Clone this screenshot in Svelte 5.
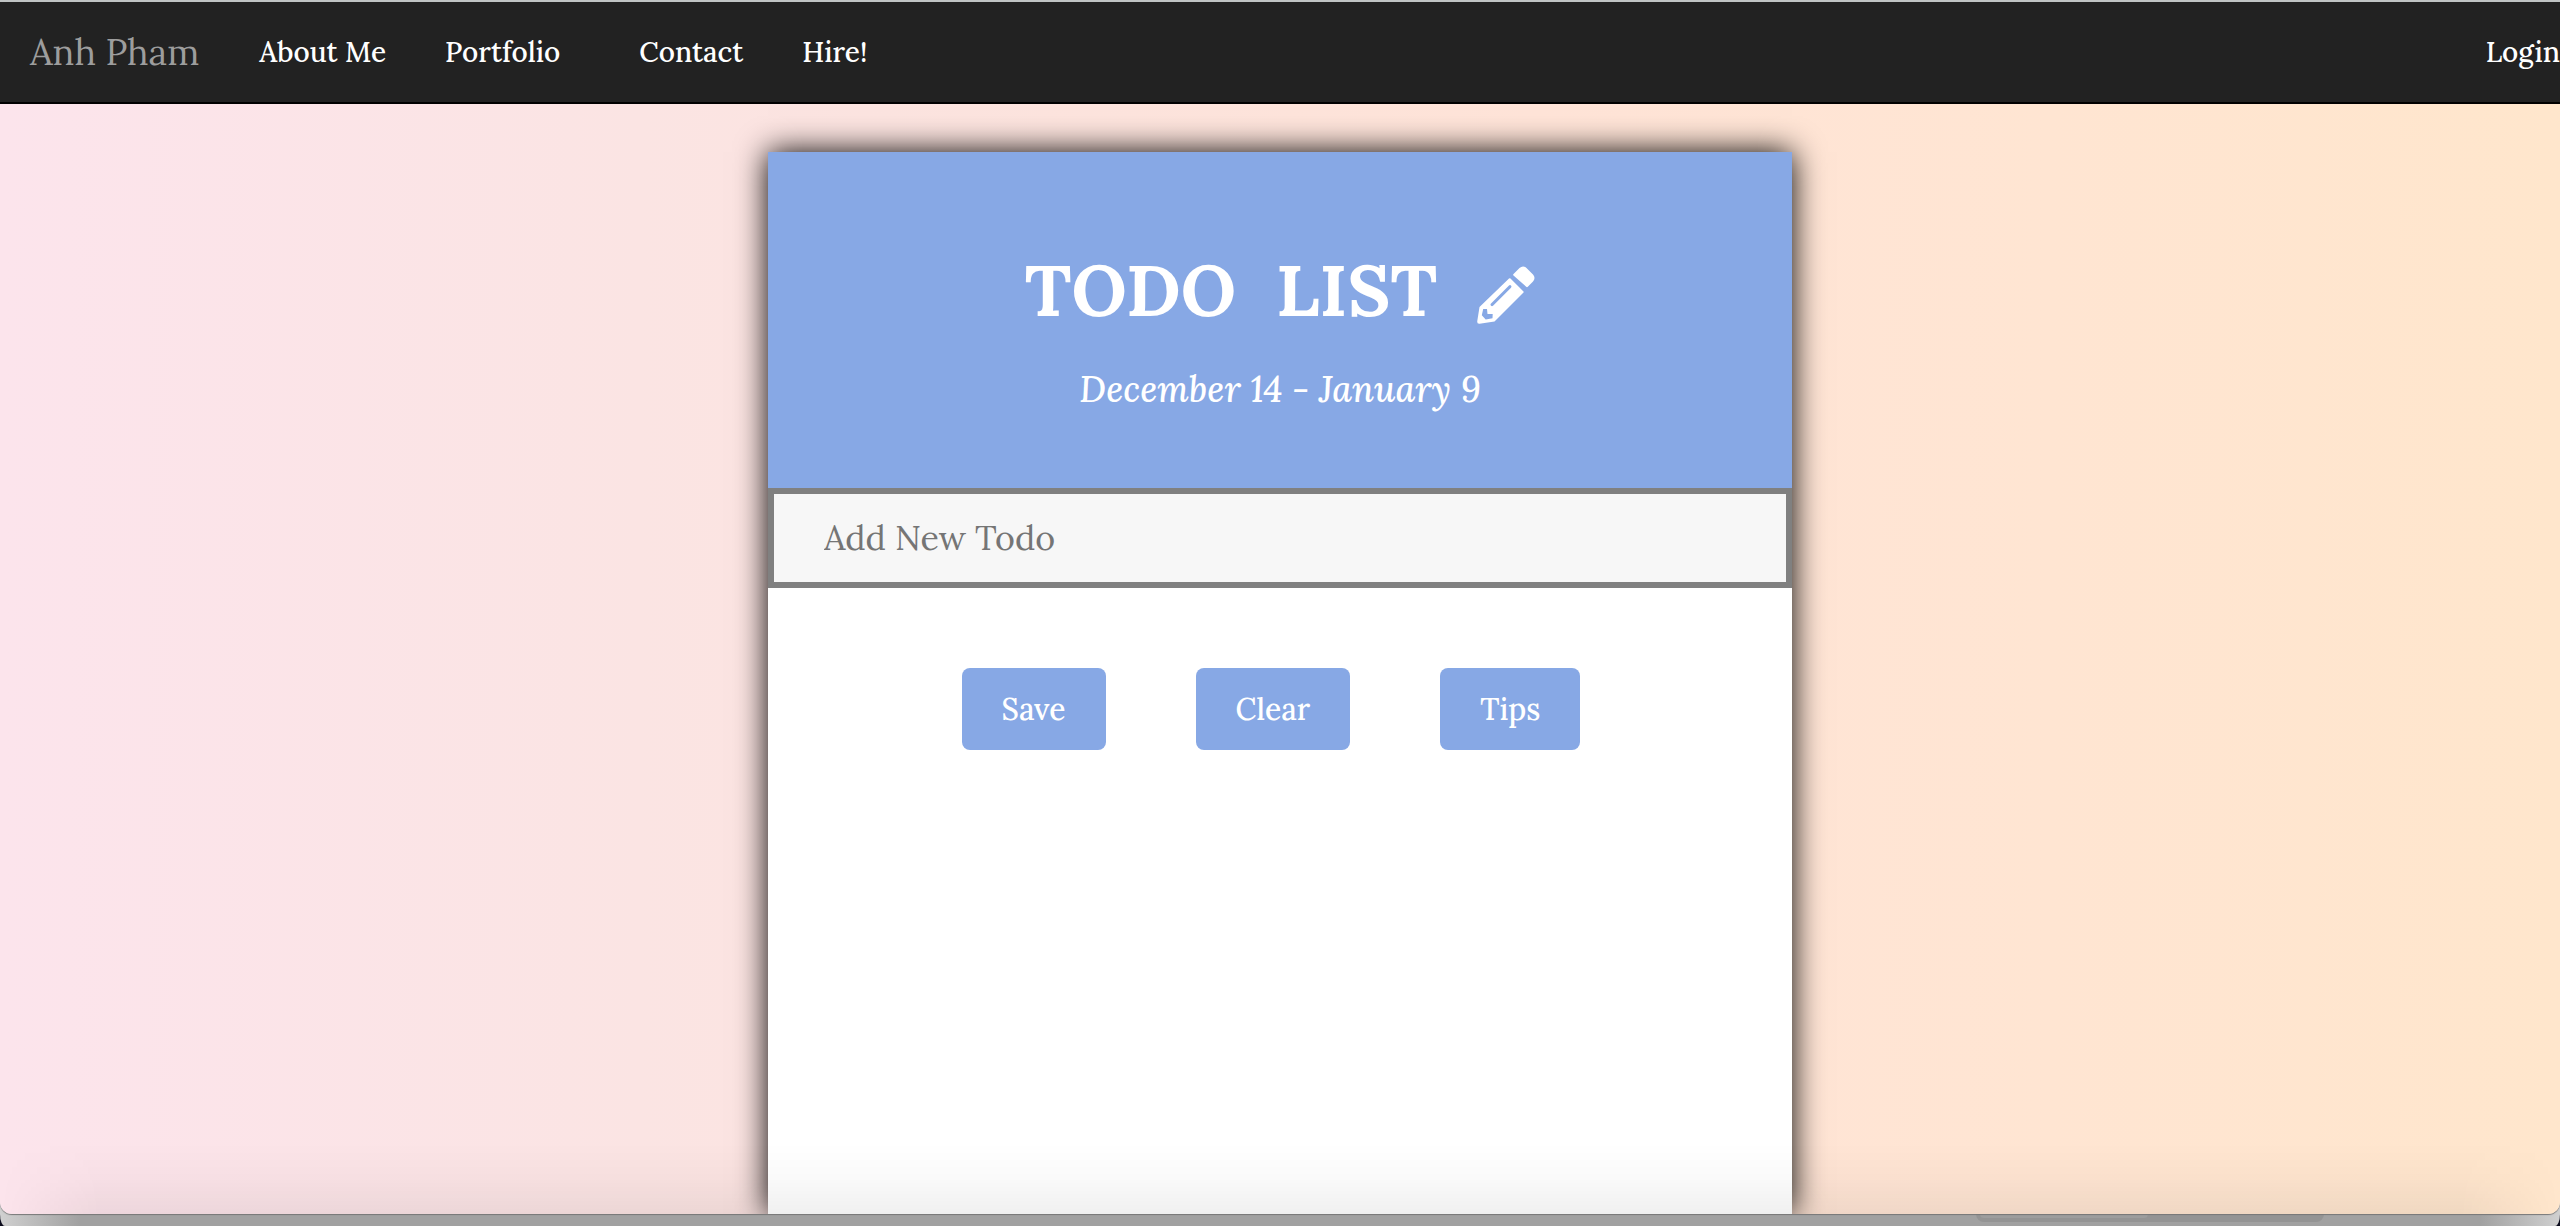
<script lang="ts">
  const links = ['About Me', 'Portfolio', 'Contact', 'Hire!'];
  const actions = ['Save', 'Clear', 'Tips'];
  let todo = $state('');
</script>

<div class="desktop">
  <div class="window">
    <nav>
      <a class="brand" href="#home">Anh Pham</a>
      <ul>
        {#each links as link}
          <li class:wide={link === 'Portfolio'}><a href="#{link}">{link}</a></li>
        {/each}
      </ul>
      <a class="login" href="#login">Login</a>
    </nav>

    <main>
      <section class="card">
        <header>
          <h1>
            <span>TODO</span>
            <span>LIST</span>
            <svg viewBox="0 0 58 58" aria-hidden="true">
              <path fill="#fff" fill-rule="evenodd" d="M33.500 12.500 L46.500 25.500 Q47 26 46.500 26.500 L17.500 55.500 L2.500 57.800 Q0 58 0.200 55.500 L2.500 41 L32 12.500 Q32.800 11.800 33.500 12.500 Z M32 19.500 L13.800 37.800 Q13 38.800 14 39.800 Q15 40.600 16 39.800 L34 21.800 Q35 20.500 34 19.500 Q33 18.700 32 19.500 Z M6.200 43 L4.800 49.300 L8.700 53.500 L15.500 52.300 L15.700 48 L10.500 48 L10 43 Z" />
              <path fill="#fff" d="M36.500 8 L42.500 2 Q46 -1 49.500 2 L56 8.500 Q59 12 56 15.500 L50.800 20.800 Q50 21.500 49.200 20.800 L36.500 9.500 Q35.800 8.700 36.500 8 Z" />
            </svg>
          </h1>
          <p>December 14 - January 9</p>
        </header>
        <input type="text" placeholder="Add New Todo" aria-label="Add New Todo" bind:value={todo} />
        <div class="actions">
          {#each actions as action}
            <button type="button">{action}</button>
          {/each}
        </div>
      </section>
    </main>
  </div>
  <div class="dock"><div class="tab"><div class="thumb"></div></div></div>
</div>

<style>
  :global(body) {
    margin: 0;
    background: #0c0c1c;
  }
  .desktop {
    min-height: 100vh;
    display: flex;
    flex-direction: column;
    overflow: hidden;
    border-radius: 0 0 5px 5px / 0 0 12px 12px;
    background: linear-gradient(90deg, #d0d0d0, #a1a1a1 80px, #a1a1a1 calc(100% - 80px), #d0d0d0);
    font-family: Lora, 'Liberation Serif', serif;
  }
  .window {
    flex: 1;
    display: flex;
    flex-direction: column;
    position: relative;
    overflow: hidden;
    border-radius: 0 0 12px 12px;
    box-shadow: 0 1px 1px #777;
    background: linear-gradient(90deg, #fce4ec, #fbe4e3 25%, #ffe4d8 60%, #ffe6cc);
  }
  .window::after {
    content: '';
    position: absolute;
    inset: auto 0 0 0;
    height: 72px;
    background: linear-gradient(transparent, rgba(0, 0, 0, 0.02) 50%, rgba(0, 0, 0, 0.06));
    mask-image: linear-gradient(90deg, transparent, #000 100px, #000 calc(100% - 100px), transparent);
    pointer-events: none;
  }
  nav {
    display: flex;
    align-items: center;
    height: 100px;
    padding-left: 30px;
    border-top: 2px solid #c0c4c4;
    border-bottom: 2px solid #000;
    background: #222;
  }
  a {
    color: #fff;
    font-size: 28px;
    font-weight: 500;
    line-height: 40px;
    text-decoration: none;
  }
  .brand {
    color: #9d9d9d;
    font-size: 36px;
    font-weight: 400;
  }
  ul {
    display: flex;
    gap: 59px;
    margin: 0 0 0 60px;
    padding: 0;
    list-style: none;
  }
  .wide {
    margin-right: 20px;
  }
  .login {
    margin-left: auto;
  }
  main {
    flex: 1;
    display: flex;
    justify-content: center;
    padding-top: 48px;
  }
  .card {
    width: 40%;
    background: #fff;
    box-shadow: 0 0 30px #000;
  }
  header {
    box-sizing: border-box;
    height: 336px;
    padding-top: 104px;
    background: #87a8e5;
    color: #fff;
    text-align: center;
  }
  h1 {
    display: flex;
    justify-content: center;
    align-items: flex-end;
    gap: 40px;
    margin: 0;
    font-size: 72px;
    line-height: 68px;
  }
  svg {
    width: 58px;
    height: 58px;
  }
  p {
    margin: 41px 0 0;
    font-size: 36px;
    font-weight: 500;
    line-height: 48px;
    font-style: italic;
  }
  input {
    display: block;
    box-sizing: border-box;
    width: 100%;
    height: 100px;
    padding: 0 50px 2px;
    border: 6px solid #808080;
    border-radius: 0;
    outline: 0;
    background: #f7f7f7;
    color: #555;
    font: 34px Lora, 'Liberation Serif', serif;
  }
  input::placeholder {
    color: #757575;
    opacity: 1;
  }
  .actions {
    display: flex;
    justify-content: center;
    gap: 90px;
    padding: 80px 18px 0 0;
  }
  button {
    height: 82px;
    padding: 0 40px;
    border: 0;
    border-radius: 8px;
    background: #87a8e5;
    color: #fff;
    font: 500 30px Lora, 'Liberation Serif', serif;
  }
  .dock {
    height: 12px;
    display: flex;
    justify-content: flex-end;
    padding-right: 236px;
  }
  .tab {
    width: 348px;
    height: 8px;
    border-radius: 0 0 8px 8px;
    background: #949494;
  }
  .thumb {
    width: 168px;
    height: 4px;
    margin-left: 4px;
    border-radius: 0 0 4px 4px;
    background: #9d9d9d;
  }
</style>
